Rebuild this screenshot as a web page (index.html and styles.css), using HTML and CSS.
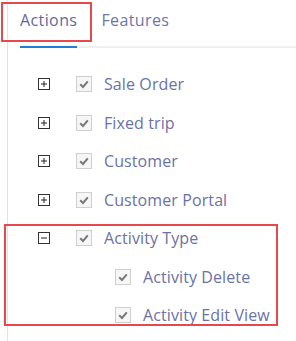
FILE: index.html
```html
<!DOCTYPE html>
<html>
<head>
<meta charset="utf-8">
<link rel="stylesheet" href="styles.css">
</head>
<body>
<div class="panel">
  <div class="tabs">
    <div class="tab active">Actions</div>
    <div class="tab">Features</div>
  </div>
  <ul class="tree">
    <li class="row">
      <svg class="exp" width="12" height="12" viewBox="0 0 12 12"><rect x="0.5" y="0.5" width="11" height="11" fill="#fff" stroke="#333"/><path d="M3 6H9M6 3V9" stroke="#222" stroke-width="1"/></svg>
      <span class="cb"><svg width="16" height="16" viewBox="0 0 16 16"><path d="M4.2 8.3L7 11L11.8 5.4" fill="none" stroke="#777" stroke-width="2"/></svg></span>
      <span class="label">Sale Order</span>
    </li>
    <li class="row">
      <svg class="exp" width="12" height="12" viewBox="0 0 12 12"><rect x="0.5" y="0.5" width="11" height="11" fill="#fff" stroke="#333"/><path d="M3 6H9M6 3V9" stroke="#222" stroke-width="1"/></svg>
      <span class="cb"><svg width="16" height="16" viewBox="0 0 16 16"><path d="M4.2 8.3L7 11L11.8 5.4" fill="none" stroke="#777" stroke-width="2"/></svg></span>
      <span class="label">Fixed trip</span>
    </li>
    <li class="row">
      <svg class="exp" width="12" height="12" viewBox="0 0 12 12"><rect x="0.5" y="0.5" width="11" height="11" fill="#fff" stroke="#333"/><path d="M3 6H9M6 3V9" stroke="#222" stroke-width="1"/></svg>
      <span class="cb"><svg width="16" height="16" viewBox="0 0 16 16"><path d="M4.2 8.3L7 11L11.8 5.4" fill="none" stroke="#777" stroke-width="2"/></svg></span>
      <span class="label">Customer</span>
    </li>
    <li class="row">
      <svg class="exp" width="12" height="12" viewBox="0 0 12 12"><rect x="0.5" y="0.5" width="11" height="11" fill="#fff" stroke="#333"/><path d="M3 6H9M6 3V9" stroke="#222" stroke-width="1"/></svg>
      <span class="cb"><svg width="16" height="16" viewBox="0 0 16 16"><path d="M4.2 8.3L7 11L11.8 5.4" fill="none" stroke="#777" stroke-width="2"/></svg></span>
      <span class="label">Customer Portal</span>
    </li>
    <li class="row">
      <svg class="exp" width="12" height="12" viewBox="0 0 12 12"><rect x="0.5" y="0.5" width="11" height="11" fill="#fff" stroke="#333"/><path d="M3 6H9" stroke="#222" stroke-width="1"/></svg>
      <span class="cb"><svg width="16" height="16" viewBox="0 0 16 16"><path d="M4.2 8.3L7 11L11.8 5.4" fill="none" stroke="#777" stroke-width="2"/></svg></span>
      <span class="label">Activity Type</span>
    </li>
    <li class="row child">
      <span class="cb"><svg width="16" height="16" viewBox="0 0 16 16"><path d="M4.2 8.3L7 11L11.8 5.4" fill="none" stroke="#777" stroke-width="2"/></svg></span>
      <span class="label">Activity Delete</span>
    </li>
    <li class="row child">
      <span class="cb"><svg width="16" height="16" viewBox="0 0 16 16"><path d="M4.2 8.3L7 11L11.8 5.4" fill="none" stroke="#777" stroke-width="2"/></svg></span>
      <span class="label">Activity Edit View</span>
    </li>
  </ul>
  <div class="mark mark-tab"></div>
  <div class="mark mark-group"></div>
</div>
</body>
</html>
```

FILE: styles.css
```css
html, body {
  margin: 0;
  padding: 0;
  background: #fff;
}
body {
  font-family: "Open Sans", "Noto Sans", sans-serif;
  color: #646c9f;
}
.panel {
  margin-left: 7px;
  border-left: 1px solid #e3e3e3;
  min-height: 341px;
  box-sizing: border-box;
}
.tabs {
  margin-left: 12px;
  display: flex;
  gap: 24px;
  border-bottom: 2px solid #efefef;
}
.tab {
  font-size: 16px;
  line-height: 20px;
  letter-spacing: 0.4px;
  padding: 10px 0 16px;
  margin-bottom: -2px;
  border-bottom: 2px solid transparent;
  color: #6d75a9;
}
.tab.active {
  color: #626a9c;
  border-bottom-color: #1f7fd8;
}
.tree {
  list-style: none;
  margin: 0;
  padding: 17px 0 0 30px;
}
.row {
  display: flex;
  align-items: center;
  height: 38.5px;
}
.exp {
  display: block;
  flex: none;
  margin-right: 26px;
}
.cb {
  flex: none;
  width: 16px;
  height: 16px;
  box-sizing: border-box;
  border: 1px solid #cfcfcf;
  background: #f6f6f6;
  margin-right: 12px;
  position: relative;
}
.cb svg {
  position: absolute;
  left: -1px;
  top: -1px;
}
.row.child {
  padding-left: 77px;
}
.label {
  font-size: 16px;
  line-height: 20px;
  letter-spacing: 0.1px;
  color: #6a72a6;
}
.mark {
  position: absolute;
  border: 2px solid #e5494e;
  box-sizing: border-box;
}
.mark-tab {
  left: 1px;
  top: 2px;
  width: 91px;
  height: 40px;
}
.mark-group {
  left: 4px;
  top: 224px;
  width: 274px;
  height: 102px;
}
```
